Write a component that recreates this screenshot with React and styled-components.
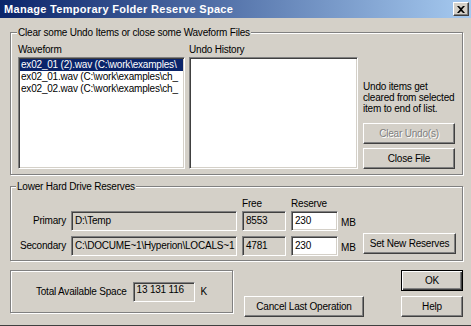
import React from 'react'
import styled, {createGlobalStyle} from 'styled-components'

const GlobalStyle = createGlobalStyle`
  html, body {
    margin: 0;
    padding: 0;
    background: #d4d0c8;
  }
  body {
    font-family: "Liberation Sans", Arial, sans-serif;
    font-size: 10px;
    letter-spacing: -0.2px;
    color: #000;
  }
`

const Window = styled.div`
  width: 471px;
  height: 326px;
  box-sizing: border-box;
  background: #d4d0c8;
  border-bottom: 1px solid #404040;
  display: flex;
  flex-direction: column;
  overflow: hidden;
`

const TitleBar = styled.div`
  height: 18px;
  flex: none;
  display: flex;
  align-items: center;
  justify-content: space-between;
  padding: 0 2px 0 4px;
  background: linear-gradient(to right, #0a246a, #a6caf0);
  color: #fff;
  font-size: 11px;
  font-weight: bold;
  letter-spacing: 0.3px;
`

const CloseBox = styled.div`
  width: 16px;
  height: 14px;
  box-sizing: border-box;
  background: #d4d0c8;
  border: 1px solid;
  border-color: #fff #404040 #404040 #fff;
  box-shadow: inset -1px -1px 0 #808080;
  display: flex;
  align-items: center;
  justify-content: center;
`

const Body = styled.div`
  flex: 1;
  display: flex;
  flex-direction: column;
  padding: 0 8px 0 10px;
`

const Group = styled.fieldset`
  margin: ${p => p.$top}px 0 0;
  padding: ${p => p.$pad};
  border: 1px solid #808080;
  box-shadow: inset 1px 1px 0 #fff, 1px 1px 0 #fff;
  min-inline-size: 0;
`

const Caption = styled.legend`
  margin-left: ${p => p.$shift}px;
  padding: 0 1px;
  line-height: 13px;
  background: #d4d0c8;
`

const UndoGrid = styled.div`
  display: grid;
  grid-template-columns: 167px 169px 92px;
  grid-template-rows: 13px 112px;
  column-gap: 4px;
  row-gap: 1px;
`

const Label = styled.div`
  line-height: 13px;
  white-space: nowrap;
`

const ListBox = styled.div`
  grid-row: 2;
  box-sizing: border-box;
  background: #fff;
  border: 1px solid;
  border-color: #808080 #fff #fff #808080;
  box-shadow: inset 1px 1px 0 #404040, inset -1px -1px 0 #d4d0c8;
  padding: 1px;
  overflow: hidden;
`

const ListItem = styled.div`
  height: 12px;
  line-height: 12px;
  padding-left: 1px;
  white-space: nowrap;
  overflow: hidden;
  background: ${p => (p.$selected ? '#0a246a' : 'transparent')};
  color: ${p => (p.$selected ? '#fff' : '#000')};
`

const SideColumn = styled.div`
  grid-column: 3;
  grid-row: 1 / 3;
  margin-left: 1px;
  display: flex;
  flex-direction: column;
  justify-content: flex-end;
  gap: 4px;
`

const Note = styled.div`
  line-height: 11px;
  margin-bottom: 5px;
  white-space: nowrap;
`

const Button = styled.button`
  font: inherit;
  letter-spacing: inherit;
  width: ${p => p.$w}px;
  height: 21px;
  flex: none;
  padding: 0;
  background: #d4d0c8;
  color: ${p => (p.disabled ? '#808080' : '#000')};
  text-shadow: ${p => (p.disabled ? '1px 1px 0 #fff' : 'none')};
  border: 1px solid;
  border-color: ${p => (p.$default ? '#000' : '#fff #404040 #404040 #fff')};
  box-shadow: ${p =>
    p.$default
      ? 'inset 1px 1px 0 #fff, inset -1px -1px 0 #404040, inset -2px -2px 0 #808080'
      : 'inset -1px -1px 0 #808080'};
  white-space: nowrap;
`

const ReserveGrid = styled.div`
  display: grid;
  grid-template-columns: 55px 166px 44px 47px 15px 93px;
  grid-template-rows: 14px 25px 20px;
  column-gap: 5px;
  align-items: start;
`

const RowLabel = styled.div`
  text-align: right;
  line-height: 20px;
  white-space: nowrap;
`

const Unit = styled.div`
  margin-left: -2px;
  line-height: 20px;
  padding-top: 2px;
`

const Field = styled.div`
  height: 20px;
  box-sizing: border-box;
  border: 1px solid;
  border-color: #808080 #fff #fff #808080;
  box-shadow: inset 1px 1px 0 #404040, inset -1px -1px 0 #d4d0c8;
  background: ${p => (p.$editable ? '#fff' : '#d4d0c8')};
  padding: 0 3px;
  line-height: 18px;
  white-space: nowrap;
  overflow: hidden;
`

const SetButtonCell = styled.div`
  grid-column: 6;
  grid-row: 3;
  margin-top: -3px;
`

const BottomRow = styled.div`
  display: flex;
  margin-top: 9px;
`

const TotalBox = styled.div`
  width: 223px;
  height: 43px;
  box-sizing: border-box;
  border: 1px solid #808080;
  box-shadow: inset 1px 1px 0 #fff, 1px 1px 0 #fff;
  display: flex;
  align-items: center;
  justify-content: center;
  gap: 6px;
`

const TotalField = styled(Field)`
  width: 62px;
  line-height: 14px;
`

const CancelWrap = styled.div`
  margin-left: 11px;
  align-self: flex-end;
`

const DialogButtons = styled.div`
  margin-left: auto;
  display: flex;
  flex-direction: column;
  gap: 5px;
`

const waveforms = [
  'ex02_01 (2).wav (C:\\work\\examples\\',
  'ex02_01.wav (C:\\work\\examples\\ch_',
  'ex02_02.wav (C:\\work\\examples\\ch_',
]

const App = () => (
  <Window>
    <GlobalStyle />
    <TitleBar>
      <span>Manage Temporary Folder Reserve Space</span>
      <CloseBox>
        <svg width="8" height="7" viewBox="0 0 8 7">
          <path d="M0 0h2l2 2 2-2h2L5 3.5 8 7H6L4 5 2 7H0l3-3.5z" fill="#000" />
        </svg>
      </CloseBox>
    </TitleBar>
    <Body>
      <Group $top={8} $pad="4px 7px 5px 7px">
        <Caption $shift={-1}>Clear some Undo Items or close some Waveform Files</Caption>
        <UndoGrid>
          <Label>Waveform</Label>
          <Label>Undo History</Label>
          <ListBox>
            {waveforms.map((w, i) => (
              <ListItem key={w} $selected={i === 0}>{w}</ListItem>
            ))}
          </ListBox>
          <ListBox />
          <SideColumn>
            <Note>
              Undo items get<br />cleared from selected<br />item to end of list.
            </Note>
            <Button $w={92} disabled>Clear Undo(s)</Button>
            <Button $w={92}>Close File</Button>
          </SideColumn>
        </UndoGrid>
      </Group>

      <Group $top={5} $pad="4px 0 4px 0">
        <Caption $shift={5}>Lower Hard Drive Reserves</Caption>
        <ReserveGrid>
          <div />
          <div />
          <Label>Free</Label>
          <Label>Reserve</Label>
          <div />
          <div />

          <RowLabel>Primary</RowLabel>
          <Field>D:\Temp</Field>
          <Field>8553</Field>
          <Field $editable>230</Field>
          <Unit>MB</Unit>
          <div />

          <RowLabel>Secondary</RowLabel>
          <Field>C:\DOCUME~1\Hyperion\LOCALS~1</Field>
          <Field>4781</Field>
          <Field $editable>230</Field>
          <Unit>MB</Unit>
          <SetButtonCell>
            <Button $w={93}>Set New Reserves</Button>
          </SetButtonCell>
        </ReserveGrid>
      </Group>

      <BottomRow>
        <TotalBox>
          <span>Total Available Space</span>
          <TotalField>13 131 116</TotalField>
          <span>K</span>
        </TotalBox>
        <CancelWrap>
          <Button $w={120}>Cancel Last Operation</Button>
        </CancelWrap>
        <DialogButtons>
          <Button $w={62} $default>OK</Button>
          <Button $w={62}>Help</Button>
        </DialogButtons>
      </BottomRow>
    </Body>
  </Window>
)

export default App
